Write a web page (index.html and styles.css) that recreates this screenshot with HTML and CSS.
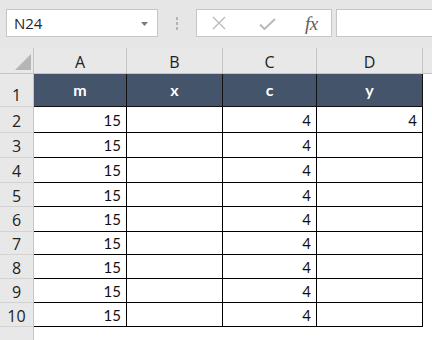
FILE: index.html
```html
<!DOCTYPE html>
<html>
<head>
<meta charset="utf-8">
<link rel="stylesheet" href="styles.css">
</head>
<body>
<div class="app">
  <div class="toolbar">
    <div class="namebox">
      <span class="name">N24</span>
      <svg class="caret" width="7" height="4" viewBox="0 0 7 4"><path d="M0 0H7L3.5 4Z" fill="#7a7a7a"/></svg>
    </div>
    <div class="grip"><i></i><i></i><i></i></div>
    <div class="fbtns">
      <svg class="ico" width="14" height="14" viewBox="0 0 14 14"><path d="M1 1L13 13M13 1L1 13" stroke="#b9b9b9" stroke-width="1.3" fill="none"/></svg>
      <svg class="ico" width="17" height="12" viewBox="0 0 17 12"><path d="M1 6.5L5.5 11L16 1" stroke="#b9b9b9" stroke-width="2" fill="none"/></svg>
      <span class="fx">fx</span>
    </div>
    <div class="finput"></div>
  </div>
  <div class="sheet">
    <div class="corner"><svg width="18" height="18" viewBox="0 0 18 18"><path d="M17 1V17H1Z" fill="#b5b5b5"/></svg></div>
    <div class="ch">A</div><div class="ch">B</div><div class="ch">C</div><div class="ch">D</div><div class="ch ce"></div>

    <div class="rh r1">1</div>
    <div class="hd">m</div><div class="hd">x</div><div class="hd">c</div><div class="hd">y</div><div class="e"></div>

    <div class="rh">2</div><div class="c">15</div><div class="c"></div><div class="c">4</div><div class="c">4</div><div class="e"></div>
    <div class="rh">3</div><div class="c">15</div><div class="c"></div><div class="c">4</div><div class="c"></div><div class="e"></div>
    <div class="rh">4</div><div class="c">15</div><div class="c"></div><div class="c">4</div><div class="c"></div><div class="e"></div>
    <div class="rh">5</div><div class="c">15</div><div class="c"></div><div class="c">4</div><div class="c"></div><div class="e"></div>
    <div class="rh">6</div><div class="c">15</div><div class="c"></div><div class="c">4</div><div class="c"></div><div class="e"></div>
    <div class="rh">7</div><div class="c">15</div><div class="c"></div><div class="c">4</div><div class="c"></div><div class="e"></div>
    <div class="rh">8</div><div class="c">15</div><div class="c"></div><div class="c">4</div><div class="c"></div><div class="e"></div>
    <div class="rh">9</div><div class="c">15</div><div class="c"></div><div class="c">4</div><div class="c"></div><div class="e"></div>
    <div class="rh">10</div><div class="c">15</div><div class="c"></div><div class="c">4</div><div class="c"></div><div class="e"></div>

    <div class="rh last"></div><div class="e"></div><div class="e"></div><div class="e"></div><div class="e"></div><div class="e"></div>
  </div>
</div>
</body>
</html>
```
FILE: styles.css
```css
html, body {
  margin: 0;
  padding: 0;
}
body {
  width: 432px;
  height: 340px;
  overflow: hidden;
  background: #e6e6e6;
  font-family: "Open Sans", "Noto Sans", sans-serif;
}
.app {
  display: flex;
  flex-direction: column;
  width: 432px;
  height: 340px;
}
.toolbar {
  height: 48px;
  box-sizing: border-box;
  padding: 9px 0 0 6px;
  display: flex;
  align-items: flex-start;
  background: #e6e6e6;
}
.namebox {
  width: 152px;
  height: 28px;
  box-sizing: border-box;
  background: #fff;
  border: 1px solid #c6c6c6;
  display: flex;
  align-items: center;
  justify-content: space-between;
  padding: 0 9px 0 7px;
}
.name {
  font-size: 15px;
  color: #262626;
  line-height: 1;
}
.caret {
  display: block;
  margin-top: 1px;
}
.grip {
  width: 38px;
  height: 28px;
  display: flex;
  flex-direction: column;
  align-items: center;
  justify-content: center;
  gap: 2px;
}
.grip i {
  display: block;
  width: 2px;
  height: 3px;
  background: #b4b4b4;
}
.fbtns {
  width: 136px;
  height: 28px;
  box-sizing: border-box;
  background: #fff;
  border: 1px solid #c6c6c6;
  display: flex;
  align-items: center;
  padding: 0 0 0 15px;
}
.fbtns .ico {
  display: block;
}
.fbtns .ico:nth-child(1) {
  margin-right: 33px;
}
.fbtns .ico:nth-child(2) {
  margin-right: 29px;
  margin-top: 2px;
}
.fx {
  font-family: "Liberation Serif", "DejaVu Serif", serif;
  font-style: italic;
  font-size: 19px;
  color: #5e5e5e;
  letter-spacing: -0.5px;
  line-height: 1;
}
.finput {
  margin-left: 4px;
  flex: 1;
  height: 28px;
  box-sizing: border-box;
  background: #fff;
  border: 1px solid #c6c6c6;
  border-right: none;
}
.sheet {
  flex: 1;
  display: grid;
  grid-template-columns: 34px 93px 96px 94px 106px 1fr;
  grid-template-rows: 26px 33px 26px 25px 25px 24px 25px 23px 24px 24px 24px 1fr;
  background: #fff;
}
.sheet > div {
  box-sizing: border-box;
}
.corner {
  background: #e8e8e8;
  border-right: 1px solid #c4c4c4;
  border-bottom: 1px solid #c4c4c4;
  display: flex;
  align-items: flex-end;
  justify-content: flex-end;
  padding: 0 1px 2px 0;
}
.corner svg {
  display: block;
}
.ch {
  background: #e8e8e8;
  border-right: 1px solid #c4c4c4;
  border-bottom: 1px solid #c4c4c4;
  font-size: 16px;
  color: #222;
  display: flex;
  align-items: center;
  justify-content: center;
  padding-top: 3px;
  line-height: 1;
  background-clip: padding-box;
}
.ch.ce {
  border-right: none;
}
.rh {
  background: #e8e8e8;
  border-right: 1px solid #c4c4c4;
  border-bottom: 1px solid #d2d2d2;
  font-size: 16px;
  color: #222;
  display: flex;
  align-items: center;
  justify-content: center;
  line-height: 1;
  padding-top: 2px;
}
.rh.r1 {
  padding-top: 10px;
}
.rh.last {
  border-bottom: none;
}
.hd {
  background: #44546a;
  border-right: 1px solid #111;
  border-bottom: 1px solid #111;
  color: #fff;
  font-family: "Lato", "Open Sans", sans-serif;
  font-weight: 700;
  font-size: 16px;
  display: flex;
  align-items: center;
  justify-content: center;
  line-height: 1;
}
.c {
  background: #fff;
  border-right: 1px solid #000;
  border-bottom: 1px solid #000;
  font-family: "Lato", "Open Sans", sans-serif;
  font-size: 15px;
  color: #111;
  display: flex;
  align-items: center;
  justify-content: flex-end;
  padding: 1px 5px 0 0;
  line-height: 1;
}
.e {
  background: #fff;
}
```
